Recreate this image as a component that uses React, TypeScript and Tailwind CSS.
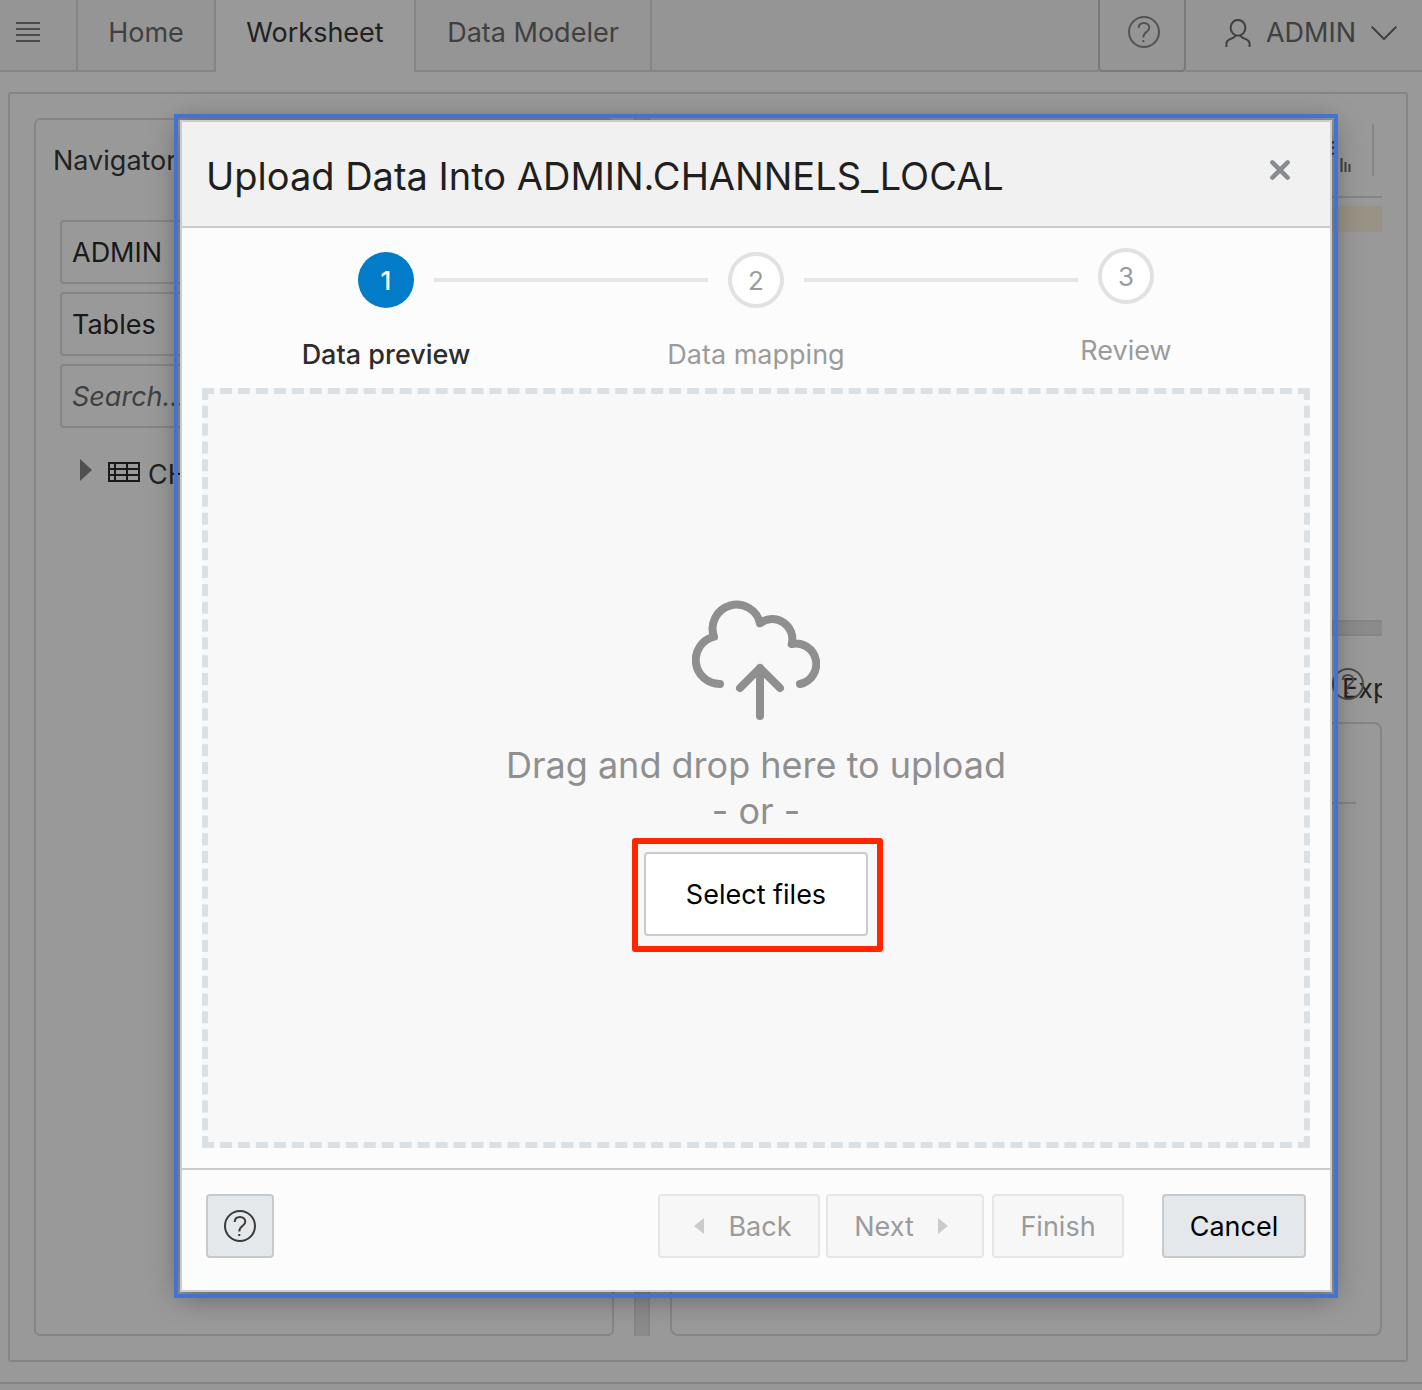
import React from "react";

function HelpIcon({ className }: { className?: string }) {
  return (
    <svg viewBox="0 0 32 32" className={`size-8 shrink-0 ${className ?? ""}`} fill="none" stroke="currentColor" strokeWidth="2" aria-hidden="true">
      <circle cx="16" cy="16" r="15" />
      <path d="M10.7 12C10.7 8.6 13 7 16 7S21.3 9 21.3 11.8C21.3 16 15.3 15.6 15.3 21.4" />
      <path d="M15.3 24v2" />
    </svg>
  );
}

function MenuIcon() {
  return (
    <svg viewBox="0 0 24 20" className="h-5 w-6" stroke="currentColor" strokeWidth="2" aria-hidden="true">
      <path d="M0 1h24M0 7h24M0 13h24M0 19h24" />
    </svg>
  );
}

function PersonIcon() {
  return (
    <svg viewBox="0 0 26 28" className="h-7 w-[26px]" fill="none" stroke="currentColor" strokeWidth="2" aria-hidden="true">
      <ellipse cx="13" cy="8.8" rx="7.4" ry="7.9" />
      <path d="M1.4 28v-3c0-3 2-4.200 4.600-5.200 3-1.200 4.200-1.400 4.400-3.600M24.600 28v-3c0-3-2-4.200-4.600-5.200-3-1.200-4.200-1.400-4.400-3.600" />
    </svg>
  );
}

function CloudUploadIcon() {
  return (
    <svg viewBox="0 0 128 120" className="h-[120px] w-32" fill="none" stroke="currentColor" strokeWidth="8" strokeLinecap="round" strokeLinejoin="round" aria-hidden="true">
      <path d="M28 84A24 24 0 0 1 22 36.700A24 24 0 1 1 68 23.300A20 20 0 0 1 99.700 44A20 20 0 0 1 108 84" />
      <path d="M68 116V68M48 88L68 68L88 88" />
    </svg>
  );
}

function TableIcon() {
  return (
    <svg viewBox="0 0 32 20" className="h-5 w-8 shrink-0" fill="none" stroke="currentColor" strokeWidth="2" aria-hidden="true">
      <rect x="1" y="1" width="30" height="18" />
      <path d="M1 7h30M1 13h30M7 1v18M19 1v18" />
    </svg>
  );
}

function ReportIcon() {
  return (
    <svg viewBox="0 0 32 32" className="size-8" fill="none" strokeWidth="2" aria-hidden="true">
      <g stroke="#2f62b0">
        <ellipse cx="9" cy="4" rx="8" ry="3" />
        <path d="M1 4v20c0 2 4 4 8 4M17 4v11M1 10c0 2 4 3 8 3s8-1 8-3M1 18c0 2 4 4 8 4" />
      </g>
      <path stroke="currentColor" d="M17 23v8M21.500 17v14M25.500 21v10M29.500 23v8" />
    </svg>
  );
}

const tab = "border-r-2 border-b-2 border-[#dedede]";

function TopBar() {
  return (
    <header className="flex h-[72px] bg-[#f8f8f8] text-[#6c6c6c]">
      <button aria-label="Menu" className={`${tab} w-[78px] pb-1.5 pl-4 text-[#7c7c7c]`}>
        <MenuIcon />
      </button>
      <nav className="flex flex-1">
        <a href="#home" className={`${tab} flex w-[138px] items-center justify-center pb-1`}>Home</a>
        <a href="#worksheet" aria-current="page" className="flex w-[198px] items-center justify-center bg-white pb-1.5 text-[#383838]">Worksheet</a>
        <a href="#modeler" className={`${tab} flex w-[238px] items-center justify-center border-l-2 pb-1`}>Data Modeler</a>
        <div className="flex-1 border-b-2 border-[#dedede]" />
      </nav>
      <button aria-label="Help" className="flex w-[88px] items-center justify-center rounded-b-sm border-2 border-t-0 border-[#cbcbcb] pb-1.5 pl-1 text-[#8a8a8a]">
        <HelpIcon />
      </button>
      <button className="flex w-[236px] items-center justify-end gap-[15px] border-b-2 border-[#dedede] pr-[25px] pb-1">
        <PersonIcon />
        <span>ADMIN</span>
        <svg viewBox="0 0 26 14" className="h-3.5 w-[26px]" fill="none" stroke="currentColor" strokeWidth="2" aria-hidden="true">
          <path d="M.7.7L13 13L25.300.7" />
        </svg>
      </button>
    </header>
  );
}

const field = "h-16 w-full appearance-none rounded-sm border-2 border-[#dedede] bg-transparent px-2.5 text-[#2b2b2b]";

function Navigator() {
  return (
    <aside className="w-[580px] shrink-0 rounded-md border-2 border-[#dedede]">
      <h2 className="flex h-[76px] items-center pl-[17px] text-[#3a3a3a]">
        <span className="pt-1.5">Navigator</span>
      </h2>
      <div className="flex flex-col gap-2 px-6 pt-6">
        <select aria-label="Schema" className={`${field} pt-0.5`}><option>ADMIN</option></select>
        <select aria-label="Object type" className={`${field} pt-0.5`}><option>Tables</option></select>
        <input aria-label="Search" placeholder="Search..." className={`${field} italic placeholder:text-[#6c6c6c]`} />
        <ul className="pt-4 pl-5 text-[#3a3a3a]">
          <li className="flex h-10 items-center">
            <svg viewBox="0 0 12 22" className="mb-1 h-[22px] w-3 fill-[#858585]" aria-hidden="true"><path d="M0 0L12 11L0 22Z" /></svg>
            <span className="ml-4 text-[#2b2b2b]"><TableIcon /></span>
            <span className="ml-2 pt-1.5">CHANNELS_LOCAL</span>
          </li>
        </ul>
      </div>
    </aside>
  );
}

function Workspace() {
  return (
    <section className="flex min-w-0 flex-1 flex-col">
      <div className="flex h-20 items-center justify-end gap-5 border-b-2 border-[#dedede] pr-2">
        <button aria-label="Data report" className="text-[#6c6c6c]"><ReportIcon /></button>
        <div className="mb-3.5 h-[52px] w-0.5 bg-[#dedede]" />
      </div>
      <div className="mt-2 h-[26px] bg-[#fff5e0]" />
      <div className="h-[388px]" />
      <div className="h-4 shrink-0 border-y-2 border-[#dedede] bg-[#e8e8e8]" />
      <div className="flex h-[86px] items-center justify-end text-[#3a3a3a]">
        <div className="relative w-10">
          <div className="overflow-hidden pt-5">Exp</div>
          <button aria-label="Output help" className="absolute top-[18px] -left-2.5 text-[#7c7c7c]"><HelpIcon /></button>
        </div>
      </div>
      <div className="flex-1 rounded-lg border-2 border-[#dedede] px-6">
        <div className="h-20 border-b-2 border-[#dedede]" />
      </div>
    </section>
  );
}

const steps = ["Data preview", "Data mapping", "Review"];

function Steps() {
  return (
    <ol className="grid grid-cols-3 px-[19px] pt-5 pb-3.5 text-[#9b9b9b]">
      {steps.map((label, i) => (
        <li key={label}>
          <div className="flex items-start gap-5">
            <div className={`mt-[30px] h-1 flex-1 ${i > 0 ? "bg-[#e6e6e6]" : ""}`} />
            <div className={`flex size-14 items-center justify-center rounded-full pt-0.5 text-[26px] ${i < 2 ? "mt-1" : ""} ${i === 0 ? "bg-[#027bc9] font-medium text-white" : "border-4 border-[#e0e1e1] bg-white"}`}>
              {i + 1}
            </div>
            <div className={`mt-[30px] h-1 flex-1 ${i < 2 ? "bg-[#e6e6e6]" : ""}`} />
          </div>
          <div className={`mt-7 text-center ${i === 0 ? "font-medium text-[#2d2d2d]" : ""}`}>{label}</div>
        </li>
      ))}
    </ol>
  );
}

const navButton = "flex h-16 items-center justify-center gap-6 rounded-sm border-2 border-[#e6e6e6] bg-[#f7f7f7] text-[#9b9b9b]";
const solidButton = "flex h-16 items-center justify-center rounded-sm border-2 border-[#c6cacd] bg-[#e4e8eb]";

function UploadDialog() {
  return (
    <div role="dialog" aria-modal="true" aria-labelledby="upload-title" className="flex w-full flex-col border-2 border-[#cbcccd] bg-[#fcfcfc] shadow-[0_4px_28px_rgba(0,0,0,0.4)] outline-4 outline-offset-2 outline-[#4472cf]">
      <div className="flex h-[106px] items-center justify-between border-b-2 border-[#cbcbcb] bg-[#f1f1f1] pr-10 pl-6">
        <h1 id="upload-title" className="pt-1 text-[38px] text-[#1f1f1f]">Upload Data Into ADMIN.CHANNELS_LOCAL</h1>
        <button aria-label="Close" className="mb-2 text-[#888c90]">
          <svg viewBox="0 0 20 20" className="size-5" stroke="currentColor" strokeWidth="4.500" strokeLinecap="round" aria-hidden="true">
            <path d="M2.400 2.400L17.600 17.600M17.600 2.400L2.400 17.600" />
          </svg>
        </button>
      </div>
      <Steps />
      <div className="mx-5 mb-5 flex min-h-[760px] flex-1 flex-col items-center justify-center border-[6px] border-dashed border-[#dae0e4] bg-[#f8f8f8] text-[#8f8f8f]">
        <CloudUploadIcon />
        <p className="mt-[22px] text-center text-[36px] leading-[46px]">Drag and drop here to upload<br />- or -</p>
        <div className="relative mt-[18px]">
          <button className="h-[84px] w-56 rounded-sm border-2 border-[#cbcbcb] bg-white pt-0.5 text-black">Select files</button>
          <div className="pointer-events-none absolute -top-3.5 -right-[15px] -bottom-4 -left-3 rounded-[3px] border-6 border-[#ff2600]" />
        </div>
      </div>
      <div className="flex h-[122px] items-start border-t-2 border-[#cbcbcb] px-6 pt-6">
        <button aria-label="Help" className={`${solidButton} w-[68px] text-[#3a3a3a]`}><HelpIcon /></button>
        <div className="flex-1" />
        <button disabled className={`${navButton} w-[162px] pl-2`}>
          <svg viewBox="0 0 10 16" className="h-4 w-2.5 fill-[#cbcbcb]" aria-hidden="true"><path d="M10 0L0 8L10 16Z" /></svg>
          <span className="pt-0.5">Back</span>
        </button>
        <button disabled className={`${navButton} ml-1.5 w-[158px] pr-2`}>
          <span className="pt-0.5">Next</span>
          <svg viewBox="0 0 10 16" className="h-4 w-2.5 fill-[#cbcbcb]" aria-hidden="true"><path d="M0 0L10 8L0 16Z" /></svg>
        </button>
        <button disabled className={`${navButton} ml-2 w-[132px]`}>
          <span className="pt-0.5">Finish</span>
        </button>
        <button className={`${solidButton} ml-[38px] w-36 text-black`}>
          <span className="pt-0.5">Cancel</span>
        </button>
      </div>
    </div>
  );
}

export default function App() {
  return (
    <div className="grid min-h-screen grid-cols-1 overflow-hidden bg-white font-['Inter',sans-serif] text-[27px] leading-[38px]">
      <div className="col-start-1 row-start-1 flex flex-col">
        <TopBar />
        <main className="mt-5 mr-3.5 ml-2 flex flex-1 gap-5 rounded-[3px] border-2 border-[#dedede] p-6">
          <Navigator />
          <div className="w-4 shrink-0 border-x-2 border-[#dedede] bg-[#e8e8e8]" />
          <Workspace />
        </main>
        <footer className="mt-5 h-2 border-t-2 border-[#dedede] bg-[#fcf9f9]" />
      </div>
      <div className="z-10 col-start-1 row-start-1 flex bg-black/40 pt-[120px] pr-[90px] pb-[98px] pl-[180px]">
        <UploadDialog />
      </div>
    </div>
  );
}
